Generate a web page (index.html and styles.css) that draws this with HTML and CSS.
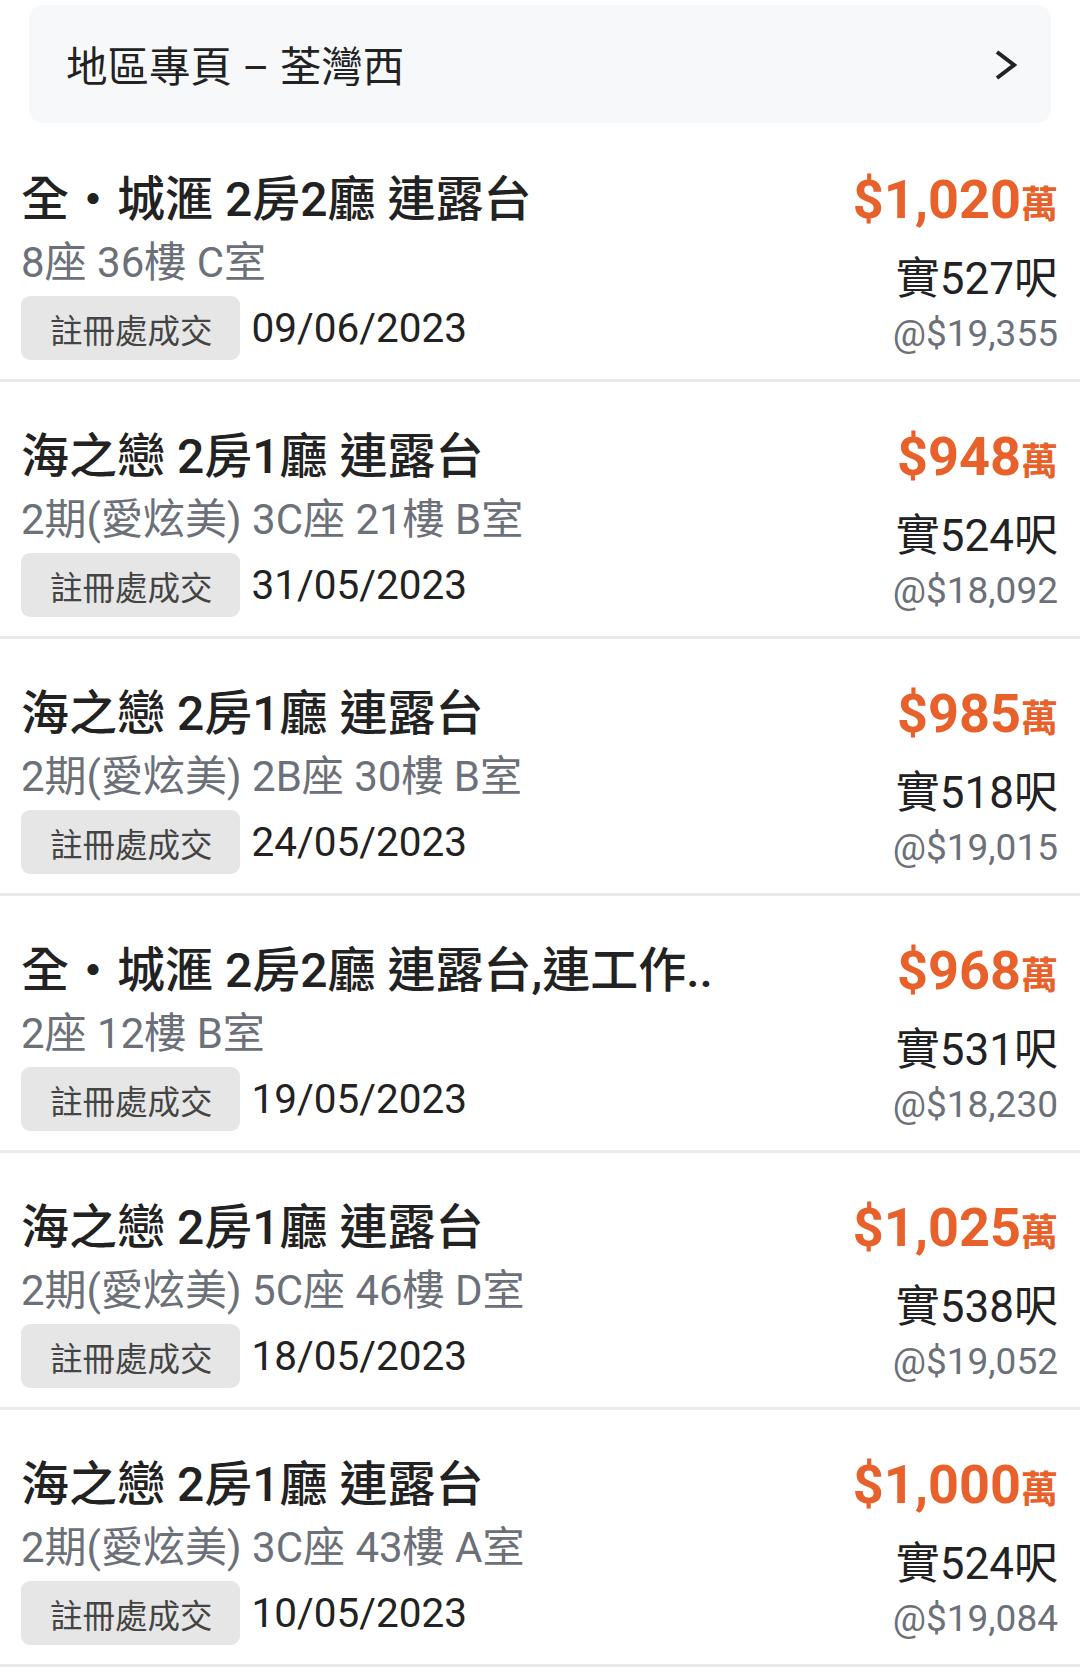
FILE: index.html
```html
<!DOCTYPE html>
<html lang="zh-Hant">
<head>
<meta charset="utf-8">
<title>成交紀錄</title>
<link rel="stylesheet" href="styles.css">
</head>
<body>
<div class="page">
  <div class="header-wrap">
    <a class="district-card" href="#">
      <span class="district-title">地區專頁 – 荃灣西</span>
      <svg class="chevron" width="24" height="36" viewBox="0 0 24 36"><polyline points="4,5 21,18 4,31" fill="none" stroke="#222" stroke-width="4" stroke-linecap="butt" stroke-linejoin="miter"/></svg>
    </a>
  </div>

  <ul class="list">
    <li class="row">
      <div class="left">
        <div class="title">全・城滙 2房2廳 連露台</div>
        <div class="sub">8座 36樓 C室</div>
        <div class="meta"><span class="badge">註冊處成交</span><span class="date">09/06/2023</span></div>
      </div>
      <div class="right">
        <div class="price">$1,020<span class="unit">萬</span></div>
        <div class="area">實527呎</div>
        <div class="ppf">@$19,355</div>
      </div>
    </li>
    <li class="row">
      <div class="left">
        <div class="title">海之戀 2房1廳 連露台</div>
        <div class="sub">2期(愛炫美) 3C座 21樓 B室</div>
        <div class="meta"><span class="badge">註冊處成交</span><span class="date">31/05/2023</span></div>
      </div>
      <div class="right">
        <div class="price">$948<span class="unit">萬</span></div>
        <div class="area">實524呎</div>
        <div class="ppf">@$18,092</div>
      </div>
    </li>
    <li class="row">
      <div class="left">
        <div class="title">海之戀 2房1廳 連露台</div>
        <div class="sub">2期(愛炫美) 2B座 30樓 B室</div>
        <div class="meta"><span class="badge">註冊處成交</span><span class="date">24/05/2023</span></div>
      </div>
      <div class="right">
        <div class="price">$985<span class="unit">萬</span></div>
        <div class="area">實518呎</div>
        <div class="ppf">@$19,015</div>
      </div>
    </li>
    <li class="row">
      <div class="left">
        <div class="title">全・城滙 2房2廳 連露台,連工作..</div>
        <div class="sub">2座 12樓 B室</div>
        <div class="meta"><span class="badge">註冊處成交</span><span class="date">19/05/2023</span></div>
      </div>
      <div class="right">
        <div class="price">$968<span class="unit">萬</span></div>
        <div class="area">實531呎</div>
        <div class="ppf">@$18,230</div>
      </div>
    </li>
    <li class="row">
      <div class="left">
        <div class="title">海之戀 2房1廳 連露台</div>
        <div class="sub">2期(愛炫美) 5C座 46樓 D室</div>
        <div class="meta"><span class="badge">註冊處成交</span><span class="date">18/05/2023</span></div>
      </div>
      <div class="right">
        <div class="price">$1,025<span class="unit">萬</span></div>
        <div class="area">實538呎</div>
        <div class="ppf">@$19,052</div>
      </div>
    </li>
    <li class="row">
      <div class="left">
        <div class="title">海之戀 2房1廳 連露台</div>
        <div class="sub">2期(愛炫美) 3C座 43樓 A室</div>
        <div class="meta"><span class="badge">註冊處成交</span><span class="date">10/05/2023</span></div>
      </div>
      <div class="right">
        <div class="price">$1,000<span class="unit">萬</span></div>
        <div class="area">實524呎</div>
        <div class="ppf">@$19,084</div>
      </div>
    </li>
  </ul>
</div>
</body>
</html>
```

FILE: styles.css
```css
* { box-sizing: border-box; }
html, body { margin: 0; padding: 0; background: #fff; }
body {
  font-family: Roboto, "Noto Sans CJK TC", "Noto Sans", sans-serif;
  color: #222;
  width: 1080px;
  overflow: hidden;
}
.page { width: 1080px; }

.header-wrap { padding: 5px 29px 2px 29px; }
.district-card {
  display: flex;
  align-items: center;
  justify-content: space-between;
  height: 118px;
  padding: 8px 34px 0 37px;
  background: #f7f8fa;
  border-radius: 14px;
  text-decoration: none;
  color: #222;
}
.district-title { font-size: 41.5px; line-height: 1; }
.chevron { display: block; margin-top: -7px; }

.list { list-style: none; margin: 0; padding: 0; }
.row {
  display: flex;
  justify-content: space-between;
  height: 257px;
  padding: 43px 22px 0 21px;
  border-bottom: 3px solid #e8e9eb;
}
.left { display: flex; flex-direction: column; min-width: 0; }
.title {
  height: 64px;
  font-size: 48px;
  font-weight: 500;
  line-height: 64px;
  color: #222;
  white-space: nowrap;
}
.sub {
  height: 62px;
  font-size: 42px;
  line-height: 62px;
  color: #6b7079;
  white-space: nowrap;
}
.meta { display: flex; align-items: center; margin-top: 2px; }
.badge {
  display: inline-flex;
  align-items: center;
  height: 64px;
  padding: 0 27px 0 29px;
  background: #e6e6e6;
  border-radius: 9px;
  font-size: 32.5px;
  color: #444;
}
.date { margin-left: 12px; font-size: 40.5px; color: #222; }

.right { display: flex; flex-direction: column; align-items: flex-end; }
.price {
  height: 64px;
  font-size: 54px;
  font-weight: 700;
  line-height: 64px;
  color: #e8602a;
  white-space: nowrap;
}
.unit { font-size: 37px; font-weight: 700; }
.area {
  height: 58px;
  margin-top: 18px;
  font-size: 44px;
  line-height: 58px;
  color: #222;
}
.ppf {
  height: 52px;
  font-size: 37px;
  line-height: 52px;
  color: #6b7079;
}
```
